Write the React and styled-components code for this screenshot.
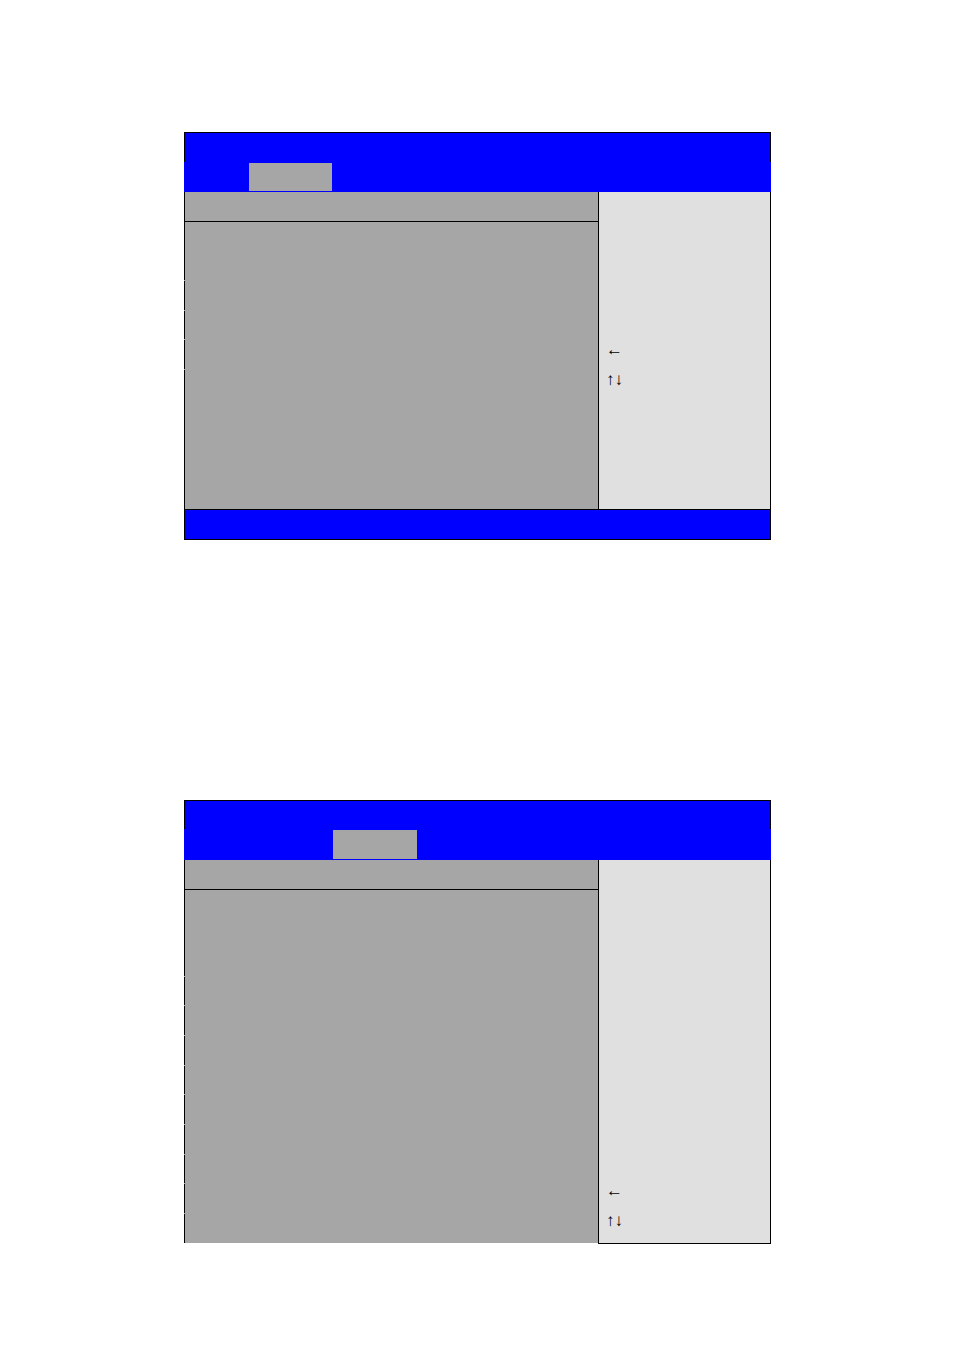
import styled, { createGlobalStyle } from "styled-components";

const screens = [
  {
    id: "first",
    titleHeight: 30,
    menuHeight: 30,
    tabStart: 65,
    tabWidth: 83,
    leadHeight: 58,
    rows: [30, 29, 30, 140],
    footer: true,
  },
  {
    id: "second",
    titleHeight: 29,
    menuHeight: 31,
    tabStart: 149,
    tabWidth: 84,
    leadHeight: 86,
    rows: [29, 30, 30, 29, 30, 30, 29, 30, 30],
    footer: false,
  },
];

function SetupScreen({ screen }) {
  return (
    <Screen>
      <Title $height={screen.titleHeight} />
      <Menu $height={screen.menuHeight}>
        <ActiveTab $start={screen.tabStart} $width={screen.tabWidth} />
      </Menu>
      <Body>
        <Settings>
          <Heading />
          <Lead $height={screen.leadHeight} />
          {screen.rows.map((height, index) => (
            <Row key={index} $height={height} />
          ))}
        </Settings>
        <Help $closed={!screen.footer}>
          <Key>←</Key>
          <Key>↑↓</Key>
        </Help>
      </Body>
      {screen.footer && <Footer />}
    </Screen>
  );
}

function App() {
  return (
    <>
      <GlobalStyle />
      <Page>
        {screens.map((screen) => (
          <SetupScreen key={screen.id} screen={screen} />
        ))}
      </Page>
    </>
  );
}

const GlobalStyle = createGlobalStyle`
  * {
    box-sizing: border-box;
  }

  body {
    margin: 0;
    background: #ffffff;
  }
`;

const Page = styled.main`
  display: flex;
  flex-direction: column;
  gap: 260px;
  padding: 132px 183px 106px 184px;
  font-family: "Liberation Sans", Arial, sans-serif;
`;

const Screen = styled.section`
  display: flex;
  flex-direction: column;
`;

const Title = styled.header`
  height: ${(props) => props.$height}px;
  background: #0000ff;
  border: 1px solid #000000;
  border-bottom: 0;
`;

const Menu = styled.div`
  display: flex;
  height: ${(props) => props.$height}px;
  padding: 1px 0;
  background: #0000ff;
`;

const ActiveTab = styled.div`
  width: ${(props) => props.$width}px;
  margin-left: ${(props) => props.$start}px;
  background: #a6a6a6;
`;

const Body = styled.div`
  display: grid;
  grid-template-columns: 414fr 173fr;
  align-items: start;
`;

const Settings = styled.div`
  background: #a6a6a6;
`;

const Heading = styled.div`
  height: 30px;
  border-left: 1px solid #000000;
  border-bottom: 1px solid #000000;
`;

const Lead = styled.div`
  height: ${(props) => props.$height}px;
  border-left: 1px solid #000000;
`;

/* the frame line breaks for a pixel above each row */
const Row = styled.div`
  height: ${(props) => props.$height - 1}px;
  margin-top: 1px;
  border-left: 1px solid #000000;
`;

const Help = styled.aside`
  display: flex;
  flex-direction: column;
  align-self: stretch;
  justify-content: flex-end;
  padding: 0 7px ${(props) => (props.$closed ? 7 : 114)}px;
  margin-bottom: ${(props) => (props.$closed ? -1 : 0)}px;
  background: #e0e0e0;
  border: solid #000000;
  border-width: 0 1px ${(props) => (props.$closed ? 1 : 0)}px 1px;
`;

const Key = styled.div`
  font-size: 17px;
  line-height: 30px;
  color: #000000;
`;

const Footer = styled.footer`
  height: 31px;
  background: #0000ff;
  border: 1px solid #000000;
`;

export default App;
